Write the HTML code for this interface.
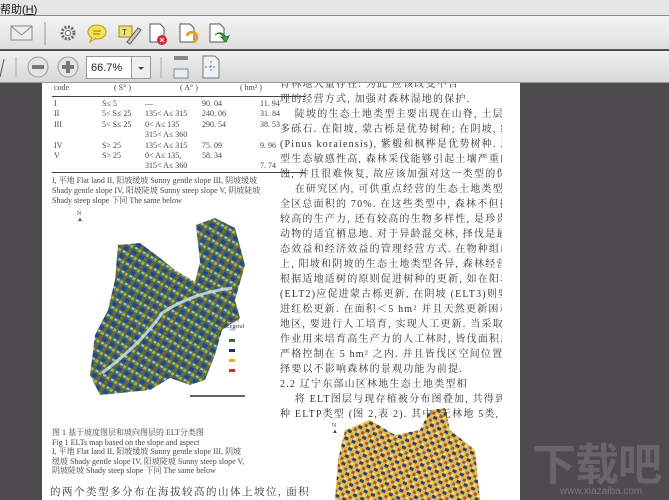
<!DOCTYPE html>
<html><head><meta charset="utf-8"><style>
*{margin:0;padding:0;box-sizing:border-box}
body{width:669px;height:500px;overflow:hidden;background:#4d4b4e;font-family:"Liberation Serif","Noto Serif CJK SC",serif;position:relative}
.menu{position:absolute;left:0;top:0;width:669px;height:16px;background:#e6e6e6;border-bottom:1px solid #8a8a8a;font:11px "Liberation Sans","Noto Sans CJK SC",sans-serif;padding:1px 0 0 0;color:#111}
.tb1{position:absolute;left:0;top:16px;width:669px;height:34px;background:linear-gradient(#f4f4f4,#dedede);border-bottom:1px solid #555}
.tb2{position:absolute;left:0;top:51px;width:669px;height:32px;background:linear-gradient(#f0f0f0,#d8d8d8);border-bottom:1px solid #999}
.page{position:absolute;left:42px;top:83px;width:478px;height:417px;background:#fff;overflow:hidden;color:#333}
.t{position:absolute;font-size:10px;white-space:nowrap;letter-spacing:1.2px;overflow:hidden}
.s{position:absolute;font-size:8px;white-space:nowrap;color:#444}
</style></head><body>
<div class="menu">帮助(<u>H</u>)</div>
<div class="tb1">
<svg width="669" height="34">
<rect x="11" y="10" width="21" height="14" fill="#eee" stroke="#888"/><path d="M11 10 L21.5 19 L32 10" fill="none" stroke="#888"/>
<line x1="45" y1="6" x2="45" y2="29" stroke="#999"/>
<circle cx="68" cy="17" r="6" fill="none" stroke="#666" stroke-width="3" stroke-dasharray="2 1.5"/><circle cx="68" cy="17" r="2.5" fill="#fff" stroke="#666"/>
<ellipse cx="97" cy="16" rx="9" ry="7" fill="#f5e05a" stroke="#b99a1a"/><path d="M92 21 L90 26 L96 22" fill="#f5e05a" stroke="#b99a1a"/><line x1="93" y1="15" x2="101" y2="15" stroke="#9a7a10"/><line x1="93" y1="18" x2="100" y2="18" stroke="#9a7a10"/>
<rect x="119" y="10" width="13" height="11" fill="#f3e26a" stroke="#9a8a20"/><text x="122" y="19" font-size="8" font-family="Liberation Sans" fill="#333">T</text><path d="M127 26 L138 12 L141 14 L130 28 Z" fill="#ccc" stroke="#555"/>
<path d="M150 8 h10 l4 4 v14 h-14 Z" fill="#fff" stroke="#555"/><circle cx="162" cy="24" r="5" fill="#d23"/><path d="M160 22 l4 4 M164 22 l-4 4" stroke="#fff"/>
<path d="M180 8 h10 l4 4 v14 h-14 Z" fill="#fff" stroke="#555"/><path d="M187 20 a5 5 0 1 1 6 6" fill="none" stroke="#e8a020" stroke-width="3"/>
<path d="M210 8 h10 l4 4 v14 h-14 Z" fill="#fff" stroke="#555"/><path d="M215 19 q4 -4 9 2 l-3 0 l5 5 l3 -6 l-3 1 q-5 -7 -11 -2" fill="#4a4" stroke="#272"/>
</svg></div>
<div class="tb2">
<svg width="669" height="32">
<line x1="4" y1="8" x2="0" y2="26" stroke="#555"/>
<line x1="16" y1="6" x2="16" y2="26" stroke="#aaa"/>
<circle cx="38" cy="16" r="10" fill="#e4e4e4" stroke="#999"/><rect x="32" y="14" width="12" height="4" fill="#777"/>
<circle cx="68" cy="16" r="10" fill="#e4e4e4" stroke="#999"/><rect x="62" y="14" width="12" height="4" fill="#777"/><rect x="66" y="10" width="4" height="12" fill="#777"/>
<rect x="86.5" y="5.5" width="45" height="22" fill="#fff" stroke="#999"/><text x="91" y="20" font-size="11" font-family="Liberation Sans" fill="#222">66.7%</text>
<rect x="131.5" y="5.5" width="19" height="22" fill="#eee" stroke="#999"/><path d="M138 16 h6 l-3 3 Z" fill="#444"/>
<line x1="161" y1="6" x2="161" y2="27" stroke="#aaa"/>
<rect x="174" y="5" width="14" height="4" fill="#888"/><rect x="174" y="18" width="14" height="9" fill="#e8eef5" stroke="#888"/>
<path d="M203 5 h12 l4 4 v18 h-16 Z" fill="#eef3f8" stroke="#777"/><path d="M211 10 v12 M205 16 h12" stroke="#579" stroke-dasharray="2 2"/>
</svg></div>
<div class="page">
<div class="s" style="left:12px;top:0">code</div><div class="s" style="left:72px;top:0">( S° )</div><div class="s" style="left:138px;top:0">( A° )</div><div class="s" style="left:198px;top:0">( hm² )</div>
<div style="position:absolute;left:10px;top:13px;width:253px;border-top:1.5px solid #444"></div>
<div class="s" style="left:12px;top:16px;line-height:10.4px">I<br>II<br>III<br><br>IV<br>V</div>
<div class="s" style="left:60px;top:16px;line-height:10.4px">S≤ 5<br>5&lt; S≤ 25<br>5&lt; S≤ 25<br><br>S&gt; 25<br>S&gt; 25</div>
<div class="s" style="left:103px;top:16px;line-height:10.4px">—<br>135&lt; A≤ 315<br>0&lt; A≤ 135<br>315&lt; A≤ 360<br>135&lt; A≤ 315<br>0&lt; A≤ 135,<br>315&lt; A≤ 360</div>
<div class="s" style="left:160px;top:16px;line-height:10.4px">90. 04<br>240. 06<br>290. 54<br><br>75. 09<br>58. 34</div>
<div class="s" style="left:218px;top:16px;line-height:10.4px">11. 94<br>31. 84<br>38. 53<br><br>9. 96<br><br>7. 74</div>
<div style="position:absolute;left:10px;top:89px;width:253px;border-top:1.5px solid #444"></div>
<div class="s" style="left:10px;top:93px;line-height:10px">I, 平地 Flat land II, 阳坡缓坡 Sunny gentle slope III, 阴坡缓坡<br>Shady gentle slope IV, 阳坡陡坡 Sunny steep slope V, 阴坡陡坡<br>Shady steep slope 下同 The same below</div>
<div class="s" style="left:35px;top:128px;font-size:6px">N<br>▲</div>
<svg style="position:absolute;left:0;top:0" width="478" height="417">
<defs><pattern id="p" width="9" height="9" patternUnits="userSpaceOnUse" patternTransform="rotate(30)"><rect width="9" height="9" fill="#4a7048"/><rect x="0" y="0" width="5" height="4" fill="#244890"/><rect x="5" y="5" width="3" height="3" fill="#b8a848"/><rect x="1" y="5" width="3" height="2" fill="#a8c0d0"/><rect x="6" y="1" width="2" height="2" fill="#b04838"/></pattern>
<pattern id="q" width="8" height="8" patternUnits="userSpaceOnUse" patternTransform="rotate(25)"><rect width="8" height="8" fill="#d8c050"/><rect x="0" y="0" width="4" height="3" fill="#3a3a70"/><rect x="5" y="4" width="3" height="3" fill="#b84a38"/><rect x="1" y="5" width="2" height="2" fill="#f0e8a0"/></pattern></defs>
<polygon points="76,162 98,160 118,175 133,187 153,199 158,179 154,142 173,135 193,145 203,182 193,217 198,235 180,247 173,272 163,297 148,302 128,295 108,307 58,312 48,292 53,252 66,227 73,197" fill="url(#p)"/>
<path d="M60 290 Q100 260 120 230 Q150 210 190 205" stroke="#d6e6f0" stroke-width="3" fill="none" opacity=".8"/>
<rect x="187" y="245" width="6" height="3" fill="#cde"/><rect x="187" y="256" width="6" height="3" fill="#3a6a2a"/><rect x="187" y="266" width="6" height="3" fill="#1a2a6a"/><rect x="187" y="276" width="6" height="3" fill="#e0b020"/><rect x="187" y="286" width="6" height="3" fill="#d03020"/>
<line x1="148" y1="313" x2="203" y2="313" stroke="#333" stroke-width="1.5"/>
<polygon points="303,347 328,337 353,352 378,347 388,327 403,325 408,347 433,367 438,417 293,417 296,377" fill="url(#q)"/>
</svg>
<div class="s" style="left:184px;top:232px;font-size:6px">图 例<br>Legend</div>
<div class="s" style="left:10px;top:345px;line-height:9.5px">图 1 基于坡度图层和坡向图层的 ELT分类图<br>Fig 1 ELTs map based on the slope and aspect<br>I, 平地 Flat land II, 阳坡缓坡 Sunny gentle slope III, 阴坡<br>缓坡 Shady gentle slope IV, 阳坡陡坡 Sunny steep slope V,<br>阴坡陡坡 Shady steep slope 下同 The same below</div>
<div class="t" style="left:8px;top:401px;letter-spacing:1.5px;font-size:10.5px">的两个类型多分布在海拔较高的山体上坡位, 面积</div>
<div class="t" style="left:238px;top:-6px;width:222px;line-height:15px">育林地大量存在. 为此 应该改变不合<br>理的经营方式, 加强对森林湿地的保护.<br>&nbsp;&nbsp;&nbsp;&nbsp;陡坡的生态土地类型主要出现在山脊, 土层薄,<br>多砾石. 在阳坡, 蒙古栎是优势树种; 在阴坡, 红松<br>(Pinus koraiensis), 紫椴和枫桦是优势树种. 这一类<br>型生态敏感性高, 森林采伐能够引起土壤严重的侵<br>蚀, 并且很难恢复, 故应该加强对这一类型的保护.<br>&nbsp;&nbsp;&nbsp;&nbsp;在研究区内, 可供重点经营的生态土地类型占<br>全区总面积的 70%. 在这些类型中, 森林不但拥有<br>较高的生产力, 还有较高的生物多样性, 是珍贵野生<br>动物的适宜栖息地. 对于异龄混交林, 择伐是最具生<br>态效益和经济效益的管理经营方式. 在物种组成<br>上, 阳坡和阴坡的生态土地类型各异, 森林经营应该<br>根据适地适树的原则促进树种的更新, 如在阳坡<br>(ELT2)应促进蒙古栎更新, 在阴坡 (ELT3)则要促<br>进红松更新. 在面积＜5 hm² 并且天然更新困难的<br>地区, 要进行人工培育, 实现人工更新. 当采取皆伐<br>作业用来培育高生产力的人工林时, 皆伐面积应该<br>严格控制在 5 hm² 之内. 并且皆伐区空间位置的选<br>择要以不影响森林的景观功能为前提.<br>2.2 辽宁东部山区林地生态土地类型相<br>&nbsp;&nbsp;&nbsp;&nbsp;将 ELT图层与现存植被分布图叠加, 共得到 34<br>种 ELTP类型 (图 2,表 2). 其中, 无林地 5类, 人工</div>
<div class="s" style="left:290px;top:340px;font-size:6px">N<br>▲</div>
</div>
<div style="position:absolute;left:532px;top:436px;font:bold 44px 'Noto Sans CJK SC',sans-serif;color:#68666a;white-space:nowrap;letter-spacing:-1px;line-height:50px">下载吧</div>
<div style="position:absolute;left:560px;top:486px;font:10px 'Liberation Sans',sans-serif;color:#7a787b;white-space:nowrap">www.xiazaiba.com</div>
</body></html>
